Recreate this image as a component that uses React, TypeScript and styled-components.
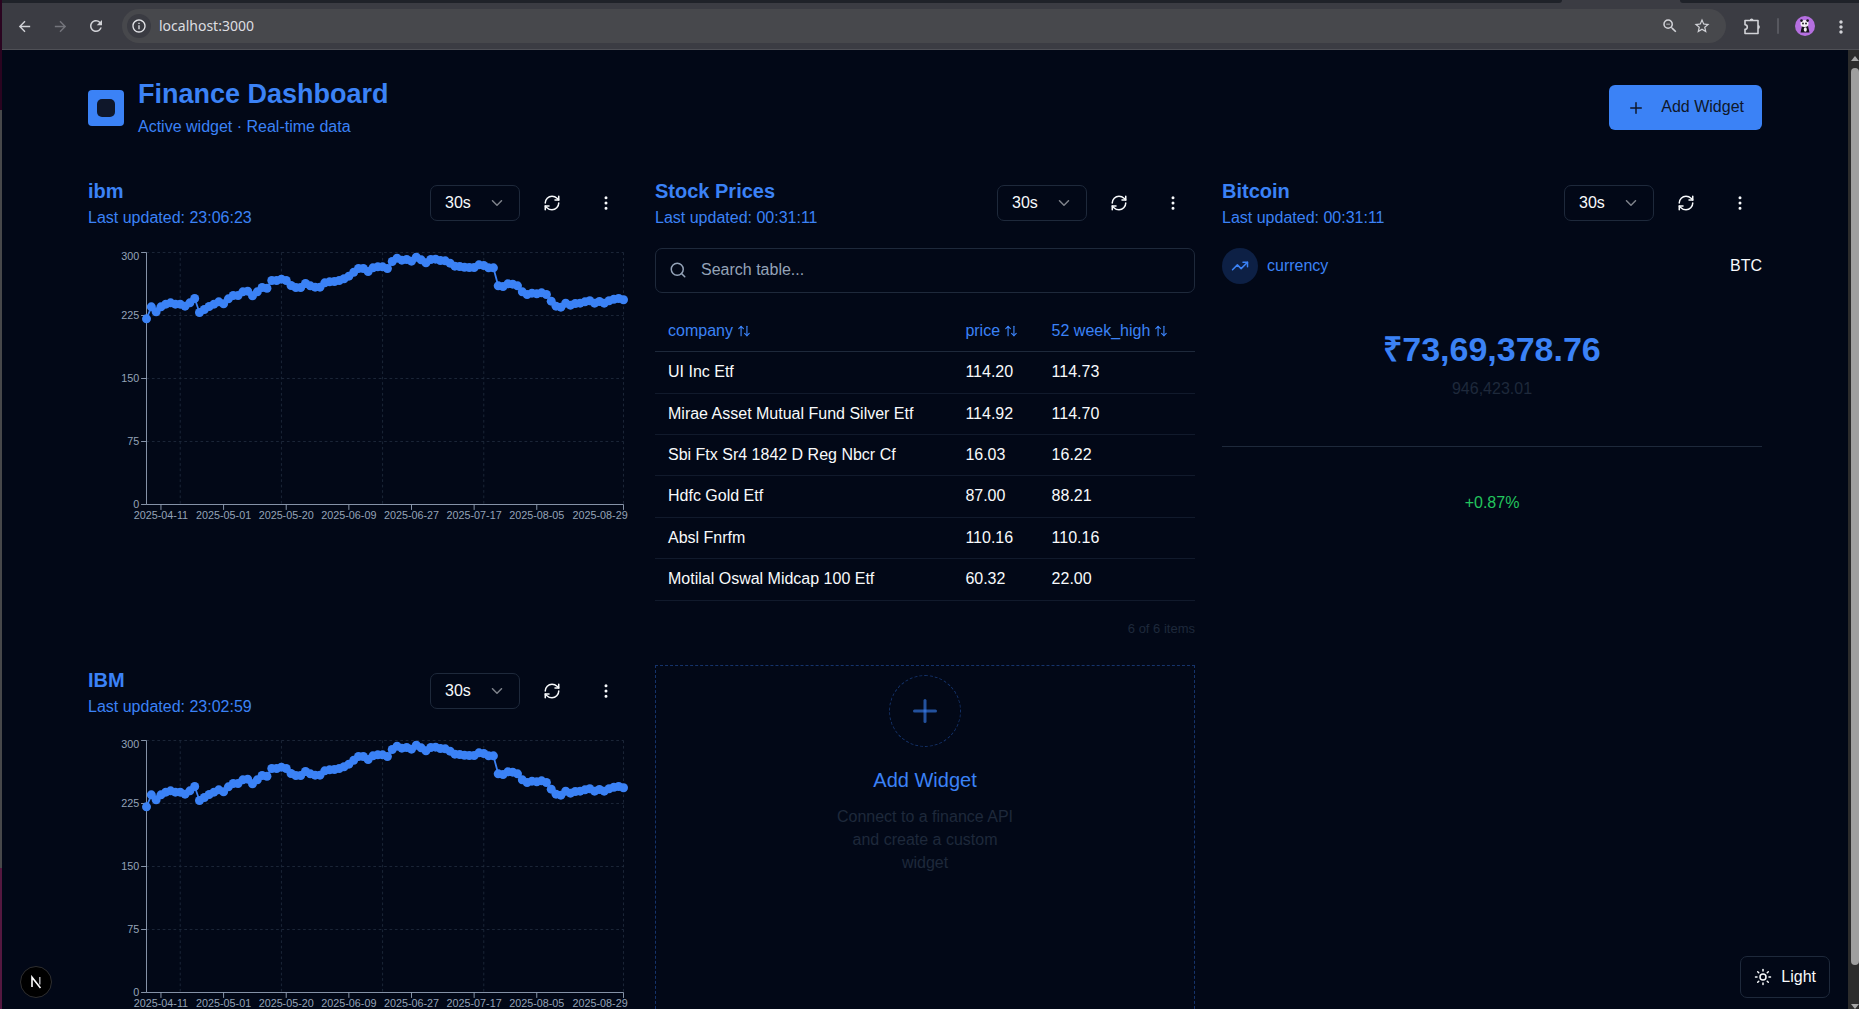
import React, { useState } from "react";
import styled, { createGlobalStyle } from "styled-components";
import {
  ArrowUpDown,
  ChevronDown,
  EllipsisVertical,
  Plus,
  RefreshCw,
  Search,
  Sun,
  TrendingUp,
} from "lucide-react";
import {
  MdArrowBack,
  MdArrowForward,
  MdInfoOutline,
  MdMoreVert,
  MdRefresh,
  MdStarBorder,
  MdZoomOut,
} from "react-icons/md";

const color = {
  background: "#020817",
  foreground: "#f8fafc",
  primary: "#3b82f6",
  onPrimary: "#0f172a",
  border: "#1e293b",
  muted: "#1e293b",
  axis: "#94a3b8",
  green: "#22c55e",
};

const GlobalStyle = createGlobalStyle`
  *, *::before, *::after { box-sizing: border-box; }
  body {
    margin: 0;
    background: ${color.background};
    color: ${color.foreground};
    font-family: "Liberation Sans", Arial, sans-serif;
    font-size: 16px;
    line-height: 1.4;
  }
  h1, h2, h3, p { margin: 0; }
  button, input, select { font: inherit; color: inherit; margin: 0; }
  button { border: 0; padding: 0; background: none; cursor: pointer; }
  svg { display: block; flex-shrink: 0; }
`;

/* ---------- Browser window ---------- */

const Window = styled.div`
  height: 100vh;
  display: flex;
  flex-direction: column;
  overflow: hidden;
  border-left: 2px solid;
  border-image: linear-gradient(
      #2a0420 0 11%,
      #47484a 11% 86%,
      #551840 86% 100%
    )
    1;
`;

const TabStrip = styled.div`
  height: 3px;
  flex-shrink: 0;
  display: flex;
  justify-content: space-between;
  background: #3b3c43;
`;

const StripPart = styled.div<{ $side: "left" | "right" }>`
  background: #1f2229;
  width: ${(p) => (p.$side === "left" ? "84%" : "179px")};
  border-radius: ${(p) => (p.$side === "left" ? "0 0 6px 0" : "0 0 0 6px")};
`;

const Toolbar = styled.div`
  height: 47px;
  flex-shrink: 0;
  display: flex;
  align-items: center;
  padding: 0 10px 0 13px;
  background: #3b3c43;
  border-bottom: 1px solid #4f5056;
  color: #c9cad0;
`;

const NavButtons = styled.nav`
  display: flex;
  gap: 18px;
  margin-right: 17px;
`;

const ChromeButton = styled.button<{ $dim?: boolean }>`
  width: 18px;
  height: 18px;
  display: grid;
  place-items: center;
  color: ${(p) => (p.$dim ? "#74757c" : "#d2d3d8")};
`;

const AddressBar = styled.form`
  flex: 1;
  height: 34px;
  display: flex;
  align-items: center;
  gap: 14px;
  padding: 0 15px 0 5px;
  border-radius: 17px;
  background: #47484c;
`;

const SiteInfo = styled.button`
  width: 24px;
  height: 24px;
  margin-right: -6px;
  border-radius: 50%;
  display: grid;
  place-items: center;
  background: #3a3b42;
  color: #e3e4e8;
`;

const AddressInput = styled.input`
  flex: 1;
  min-width: 0;
  border: 0;
  padding: 0;
  outline: 0;
  background: none;
  color: #dddee1;
  font-family: "Noto Sans", sans-serif;
  font-size: 14px;
`;

const ToolbarEnd = styled.div`
  display: flex;
  align-items: center;
  gap: 16px;
  margin-left: 17px;
`;

const ToolbarDivider = styled.span`
  width: 2px;
  height: 16px;
  border-radius: 1px;
  background: #57585f;
`;

const Avatar = styled.button`
  width: 20px;
  height: 20px;
  border-radius: 50%;
  overflow: hidden;
  background: #b56fe0;
`;

const Viewport = styled.div`
  position: relative;
  flex: 1;
  min-height: 0;
  display: flex;
`;

const Scrollbar = styled.div`
  width: 11px;
  flex-shrink: 0;
  display: flex;
  flex-direction: column;
  align-items: flex-end;
  justify-content: space-between;
  background: #2c2c2c;
`;

const ScrollArrow = styled.span<{ $down?: boolean }>`
  width: 0;
  height: 0;
  margin: ${(p) => (p.$down ? "0" : "6px 0 7px")};
  border: 4px solid transparent;
  border-top: ${(p) => (p.$down ? "5px solid #a6a6a6" : "0")};
  border-bottom: ${(p) => (p.$down ? "0" : "5px solid #a6a6a6")};
`;

const ScrollThumb = styled.span`
  flex: 1;
  width: 8px;
  margin-bottom: 39px;
  border-radius: 4px;
  background: #9f9f9f;
`;

/* ---------- Page ---------- */

const Page = styled.main`
  flex: 1;
  min-width: 0;
  overflow: hidden;
  padding: 27px 86px;
`;

const PageHeader = styled.header`
  display: flex;
  align-items: center;
  gap: 14px;
  margin-bottom: 38px;
`;

const Logo = styled.span`
  width: 36px;
  height: 36px;
  display: grid;
  place-items: center;
  border-radius: 4px;
  background: ${color.primary};

  &::after {
    content: "";
    width: 18px;
    height: 18px;
    border-radius: 5px;
    background: ${color.onPrimary};
  }
`;

const Heading = styled.div`
  flex: 1;
  display: flex;
  flex-direction: column;
  gap: 4px;
  color: ${color.primary};
`;

const PageTitle = styled.h1`
  font-size: 27px;
  line-height: 35px;
`;

const PrimaryButton = styled.button`
  height: 45px;
  display: flex;
  align-items: center;
  gap: 16px;
  padding: 0 18px;
  border-radius: 6px;
  background: ${color.primary};
  color: ${color.onPrimary};
`;

const Grid = styled.div`
  display: grid;
  grid-template-columns: repeat(3, minmax(0, 1fr));
  gap: 27px;
`;

const Widget = styled.section`
  display: flex;
  flex-direction: column;
  gap: 18px;
`;

const WidgetHeader = styled.header`
  display: flex;
  align-items: center;
  gap: 9px;
`;

const WidgetHeading = styled.div`
  flex: 1;
  display: flex;
  flex-direction: column;
  gap: 1px;
  color: ${color.primary};
`;

const WidgetTitle = styled.h2`
  font-size: 20px;
  line-height: 30px;
`;

const SelectWrap = styled.label`
  display: grid;
  align-items: center;
  width: 90px;
  height: 36px;

  > * {
    grid-area: 1 / 1;
  }

  > svg {
    justify-self: end;
    margin-right: 14px;
    opacity: 0.5;
    pointer-events: none;
  }
`;

const Select = styled.select`
  appearance: none;
  width: 100%;
  height: 100%;
  padding: 0 14px;
  border: 1px solid ${color.border};
  border-radius: 7px;
  background: ${color.background};
`;

const IconButton = styled.button`
  width: 45px;
  height: 45px;
  display: grid;
  place-items: center;
`;

/* ---------- Chart ---------- */

const ChartSvg = styled.svg`
  width: 100%;
  height: auto;
  font-size: 12px;
`;

const GridLine = styled.line`
  stroke: ${color.border};
  stroke-dasharray: 3 3;
`;

const AxisLine = styled.line`
  stroke: ${color.axis};
`;

const TickLabel = styled.text`
  fill: ${color.axis};
`;

/* ---------- Table ---------- */

const SearchField = styled.label`
  height: 45px;
  display: flex;
  align-items: center;
  gap: 14px;
  padding: 0 13px;
  border: 1px solid ${color.border};
  border-radius: 7px;
  color: ${color.axis};
`;

const SearchInput = styled.input`
  flex: 1;
  min-width: 0;
  border: 0;
  padding: 0;
  outline: 0;
  background: none;
  color: ${color.foreground};

  &::placeholder {
    color: ${color.axis};
    opacity: 1;
  }
`;

const Table = styled.table`
  width: 100%;
  border-collapse: collapse;
  text-align: left;
`;

const HeadCell = styled.th`
  padding: 9px 13px;
  border-bottom: 1px solid ${color.border};
  font-weight: 400;
`;

const SortButton = styled.button`
  display: flex;
  align-items: center;
  gap: 4px;
  color: ${color.primary};
  white-space: nowrap;
`;

const Cell = styled.td`
  padding: 9px 13px;
  border-bottom: 1px solid #111a2c;
`;

const ItemCount = styled.p`
  text-align: right;
  font-size: 13px;
  line-height: 19px;
  color: ${color.muted};
`;

/* ---------- Price card ---------- */

const AssetRow = styled.div`
  display: flex;
  align-items: center;
  gap: 9px;
`;

const AssetBadge = styled.span`
  width: 36px;
  height: 36px;
  display: grid;
  place-items: center;
  border-radius: 50%;
  background: #0d2045;
  color: ${color.primary};
`;

const AssetKind = styled.span`
  flex: 1;
  color: ${color.primary};
`;

const PriceBlock = styled.div`
  padding: 27px 0 46px;
  border-bottom: 1px solid ${color.border};
  text-align: center;
`;

const Price = styled.p`
  margin-bottom: 9px;
  font-size: 34px;
  line-height: 40px;
  font-weight: 700;
  color: ${color.primary};
`;

const Volume = styled.p`
  color: ${color.muted};
`;

const Change = styled.p`
  margin-top: 27px;
  text-align: center;
  color: ${color.green};
`;

/* ---------- Add card ---------- */

const AddCard = styled.button`
  display: flex;
  flex-direction: column;
  align-items: center;
  padding: 9px;
  border: 1px dashed #15336b;
`;

const AddCircle = styled.span`
  width: 72px;
  height: 72px;
  display: grid;
  place-items: center;
  margin-bottom: 18px;
  border: 1px dashed #15336b;
  border-radius: 50%;
  color: rgba(59, 130, 246, 0.6);
`;

const AddTitle = styled.span`
  margin-bottom: 10px;
  font-size: 20px;
  line-height: 30px;
  color: ${color.primary};
`;

const AddText = styled.span`
  max-width: 180px;
  text-align: center;
  line-height: 23px;
  color: ${color.muted};
`;

/* ---------- Floating controls ---------- */

const ThemeToggle = styled.button`
  position: absolute;
  right: 29px;
  bottom: 11px;
  height: 42px;
  display: flex;
  align-items: center;
  gap: 9px;
  padding: 0 13px;
  border: 1px solid ${color.border};
  border-radius: 7px;
  background: ${color.background};
`;

const DevBadge = styled.button`
  position: absolute;
  left: 18px;
  bottom: 11px;
  width: 32px;
  height: 32px;
  display: grid;
  place-items: center;
  border: 1px solid #2e2e30;
  border-radius: 50%;
  background: #000;
`;

/* ---------- Data ---------- */

const closes = [
  221, 235.3, 229.4, 235.3, 238.5, 240.1, 238.5, 238.5, 236.1, 240.1, 245.2,
  228.6, 232.1, 235.7, 238.5, 241.3, 238.9, 244.8, 248.8, 248.8, 253.2, 254,
  248.4, 253.2, 258.3, 257.5, 266.7, 266.7, 268.3, 266.7, 260.7, 258.3, 258.3,
  263.1, 260.3, 258.7, 258.7, 263.9, 265.1, 265.5, 266.7, 268.7, 271.8, 276.4,
  281, 281, 277.4, 281.7, 282.9, 282.9, 281, 289.3, 293.3, 290.9, 291.7, 289.7,
  294.4, 291.3, 287.7, 291.7, 292.1, 290.5, 290.1, 287.3, 283.7, 283.3, 282.5,
  282.1, 282.1, 285.3, 284.5, 281.7, 281.7, 260.3, 259.5, 262.7, 262.3, 260.3,
  253.2, 250, 251.6, 250.8, 252, 250, 242.1, 236.1, 234.9, 239.7, 237.3, 239.3,
  239.7, 241.3, 242.5, 239.7, 241.7, 239.7, 242.5, 244.4, 245.2, 243.7,
];

const dateTicks = [
  { index: 3, label: "2025-04-11" },
  { index: 16, label: "2025-05-01" },
  { index: 29, label: "2025-05-20" },
  { index: 42, label: "2025-06-09" },
  { index: 55, label: "2025-06-27" },
  { index: 68, label: "2025-07-17" },
  { index: 81, label: "2025-08-05" },
  { index: 99, label: "2025-08-29" },
];

const gridIndexes = [7, 28, 49, 70, 99];
const valueTicks = [0, 75, 150, 225, 300];

const holdings = [
  ["UI Inc Etf", "114.20", "114.73"],
  ["Mirae Asset Mutual Fund Silver Etf", "114.92", "114.70"],
  ["Sbi Ftx Sr4 1842 D Reg Nbcr Cf", "16.03", "16.22"],
  ["Hdfc Gold Etf", "87.00", "88.21"],
  ["Absl Fnrfm", "110.16", "110.16"],
  ["Motilal Oswal Midcap 100 Etf", "60.32", "22.00"],
];

const columns = ["company", "price", "52 week_high"];

/* ---------- Components ---------- */

const plot = { left: 65, right: 595, top: 5, bottom: 285 };
const xAt = (i: number) =>
  plot.left + (i / (closes.length - 1)) * (plot.right - plot.left);
const yAt = (v: number) => plot.bottom - (v / 300) * (plot.bottom - plot.top);

function PriceChart({ name }: { name: string }) {
  return (
    <ChartSvg viewBox="0 0 600 320" role="img" aria-label={`${name} chart`}>
      {valueTicks.slice(1).map((v) => (
        <GridLine
          key={v}
          x1={plot.left}
          x2={plot.right}
          y1={yAt(v)}
          y2={yAt(v)}
        />
      ))}
      {gridIndexes.map((i) => (
        <GridLine
          key={i}
          x1={xAt(i)}
          x2={xAt(i)}
          y1={plot.top}
          y2={plot.bottom}
        />
      ))}
      <AxisLine
        x1={plot.left}
        x2={plot.right}
        y1={plot.bottom}
        y2={plot.bottom}
      />
      <AxisLine x1={plot.left} x2={plot.left} y1={plot.top} y2={plot.bottom} />
      {dateTicks.map(({ index, label }) => (
        <g key={label}>
          <AxisLine
            x1={xAt(index)}
            x2={xAt(index)}
            y1={plot.bottom}
            y2={plot.bottom + 6}
          />
          <TickLabel
            x={Math.min(xAt(index), 569)}
            y={plot.bottom + 8}
            dy="0.71em"
            textAnchor="middle"
          >
            {label}
          </TickLabel>
        </g>
      ))}
      {valueTicks.map((v) => (
        <g key={v}>
          <AxisLine
            x1={plot.left - 6}
            x2={plot.left}
            y1={yAt(v)}
            y2={yAt(v)}
          />
          <TickLabel
            x={plot.left - 8}
            y={Math.max(yAt(v), 9)}
            dy="0.355em"
            textAnchor="end"
          >
            {v}
          </TickLabel>
        </g>
      ))}
      <polyline
        fill="none"
        stroke={color.primary}
        strokeWidth="2"
        points={closes.map((v, i) => `${xAt(i)},${yAt(v)}`).join(" ")}
      />
      {closes.map((v, i) => (
        <circle key={i} cx={xAt(i)} cy={yAt(v)} r="5" fill={color.primary} />
      ))}
    </ChartSvg>
  );
}

function WidgetTop({ title, updated }: { title: string; updated: string }) {
  return (
    <WidgetHeader>
      <WidgetHeading>
        <WidgetTitle>{title}</WidgetTitle>
        <p>Last updated: {updated}</p>
      </WidgetHeading>
      <SelectWrap>
        <Select aria-label={`${title} refresh interval`} defaultValue="30s">
          <option>30s</option>
          <option>1m</option>
          <option>5m</option>
        </Select>
        <ChevronDown size={18} />
      </SelectWrap>
      <IconButton aria-label={`Refresh ${title}`}>
        <RefreshCw size={18} />
      </IconButton>
      <IconButton aria-label={`${title} options`}>
        <EllipsisVertical size={18} />
      </IconButton>
    </WidgetHeader>
  );
}

function StockTable() {
  const [query, setQuery] = useState("");
  const rows = holdings.filter((row) =>
    row[0].toLowerCase().includes(query.toLowerCase())
  );
  return (
    <>
      <SearchField>
        <Search size={18} />
        <SearchInput
          aria-label="Search table"
          placeholder="Search table..."
          value={query}
          onChange={(e) => setQuery(e.target.value)}
        />
      </SearchField>
      <Table>
        <thead>
          <tr>
            {columns.map((name) => (
              <HeadCell key={name} scope="col">
                <SortButton>
                  {name}
                  <ArrowUpDown size={14} />
                </SortButton>
              </HeadCell>
            ))}
          </tr>
        </thead>
        <tbody>
          {rows.map((row) => (
            <tr key={row[0]}>
              {row.map((value, i) => (
                <Cell key={i}>{value}</Cell>
              ))}
            </tr>
          ))}
        </tbody>
      </Table>
      <ItemCount>
        {rows.length} of {holdings.length} items
      </ItemCount>
    </>
  );
}

function BrowserToolbar() {
  return (
    <Toolbar>
      <NavButtons aria-label="Browser">
        <ChromeButton aria-label="Back">
          <MdArrowBack size={17} />
        </ChromeButton>
        <ChromeButton aria-label="Forward" $dim>
          <MdArrowForward size={17} />
        </ChromeButton>
        <ChromeButton aria-label="Reload">
          <MdRefresh size={18} />
        </ChromeButton>
      </NavButtons>
      <AddressBar onSubmit={(e) => e.preventDefault()}>
        <SiteInfo type="button" aria-label="Site information">
          <MdInfoOutline size={16} />
        </SiteInfo>
        <AddressInput aria-label="Address" defaultValue="localhost:3000" />
        <ChromeButton type="button" aria-label="Zoom">
          <MdZoomOut size={18} />
        </ChromeButton>
        <ChromeButton type="button" aria-label="Bookmark">
          <MdStarBorder size={18} />
        </ChromeButton>
      </AddressBar>
      <ToolbarEnd>
        <ChromeButton aria-label="Extensions">
          <svg width="18" height="18" viewBox="0 0 18 18" fill="none">
            <path
              d="M2 3.5h13v13H2v-4.2a2.3 2.3 0 0 0 0-4.6z"
              stroke="currentColor"
              strokeWidth="1.6"
              strokeLinejoin="round"
            />
            <path
              d="M6.7 3.5a1.9 1.9 0 0 1 3.8 0zM15 8.1a1.9 1.9 0 0 1 0 3.8z"
              fill="currentColor"
            />
          </svg>
        </ChromeButton>
        <ToolbarDivider />
        <Avatar aria-label="Profile">
          <svg width="20" height="20" viewBox="0 0 20 20">
            <path d="M7 10h6l1.500 6.500H5.500z" fill="#17141c" />
            <ellipse cx="9.500" cy="7.500" rx="4" ry="3.600" fill="#f4f0f6" />
            <circle cx="6.500" cy="4.600" r="1.300" fill="#17141c" />
            <circle cx="12.600" cy="4.600" r="1.300" fill="#17141c" />
            <circle cx="8" cy="7.500" r="0.900" fill="#17141c" />
            <circle cx="11" cy="7.500" r="0.900" fill="#17141c" />
            <ellipse cx="10.300" cy="13.500" rx="1.500" ry="2.300" fill="#f4f0f6" />
          </svg>
        </Avatar>
        <ChromeButton aria-label="Menu">
          <MdMoreVert size={20} />
        </ChromeButton>
      </ToolbarEnd>
    </Toolbar>
  );
}

export default function App() {
  return (
    <Window>
      <GlobalStyle />
      <TabStrip>
        <StripPart $side="left" />
        <StripPart $side="right" />
      </TabStrip>
      <BrowserToolbar />
      <Viewport>
        <Page>
          <PageHeader>
            <Logo />
            <Heading>
              <PageTitle>Finance Dashboard</PageTitle>
              <p>Active widget · Real-time data</p>
            </Heading>
            <PrimaryButton>
              <Plus size={18} />
              Add Widget
            </PrimaryButton>
          </PageHeader>
          <Grid>
            <Widget>
              <WidgetTop title="ibm" updated="23:06:23" />
              <PriceChart name="ibm" />
            </Widget>
            <Widget>
              <WidgetTop title="Stock Prices" updated="00:31:11" />
              <StockTable />
            </Widget>
            <Widget>
              <WidgetTop title="Bitcoin" updated="00:31:11" />
              <AssetRow>
                <AssetBadge>
                  <TrendingUp size={18} />
                </AssetBadge>
                <AssetKind>currency</AssetKind>
                <span>BTC</span>
              </AssetRow>
              <PriceBlock>
                <Price>₹73,69,378.76</Price>
                <Volume>946,423.01</Volume>
              </PriceBlock>
              <Change>+0.87%</Change>
            </Widget>
            <Widget>
              <WidgetTop title="IBM" updated="23:02:59" />
              <PriceChart name="IBM" />
            </Widget>
            <AddCard>
              <AddCircle>
                <Plus size={36} />
              </AddCircle>
              <AddTitle>Add Widget</AddTitle>
              <AddText>Connect to a finance API and create a custom widget</AddText>
            </AddCard>
          </Grid>
        </Page>
        <Scrollbar aria-hidden="true">
          <ScrollArrow />
          <ScrollThumb />
          <ScrollArrow $down />
        </Scrollbar>
        <DevBadge aria-label="Open developer tools">
          <svg width="14" height="14" viewBox="0 0 14 14" fill="none">
            <path d="M3 12V2.200L11.500 13" stroke="#fff" strokeWidth="1.600" />
            <path d="M10.800 2v7.500" stroke="#b9b9bd" strokeWidth="1.400" />
          </svg>
        </DevBadge>
        <ThemeToggle>
          <Sun size={18} />
          Light
        </ThemeToggle>
      </Viewport>
    </Window>
  );
}
